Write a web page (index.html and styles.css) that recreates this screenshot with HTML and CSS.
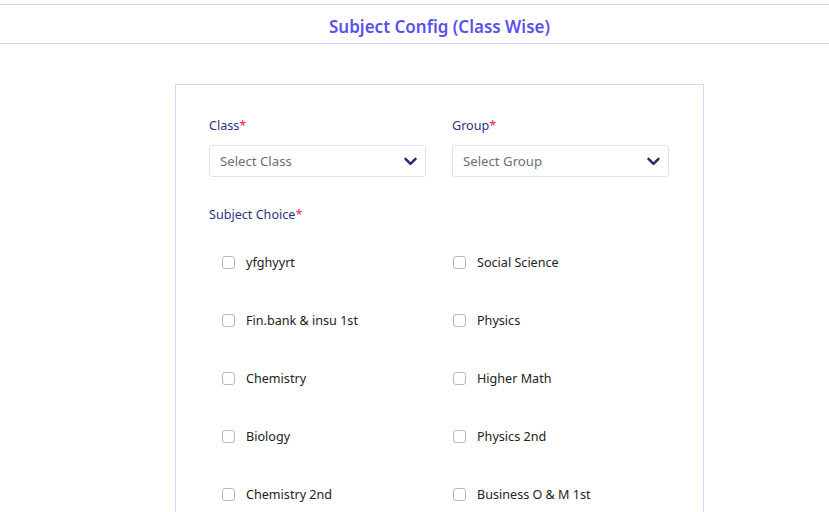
FILE: index.html
```html
<!DOCTYPE html>
<html>
<head>
<meta charset="utf-8">
<link rel="stylesheet" href="styles.css">
</head>
<body>
<header class="page-header">
  <h1 class="title">Subject Config (Class Wise)</h1>
</header>
<main class="main">
  <section class="card">
    <div class="selects">
      <div class="field">
        <label class="label">Class<span class="req">*</span></label>
        <div class="select"><span class="placeholder">Select Class</span>
          <svg class="chev" width="13" height="9" viewBox="0 0 13 9"><path d="M1.5 1.8 L6.5 6.8 L11.5 1.8" fill="none" stroke="#272c6e" stroke-width="2.4" stroke-linecap="round" stroke-linejoin="round"/></svg>
        </div>
      </div>
      <div class="field">
        <label class="label">Group<span class="req">*</span></label>
        <div class="select"><span class="placeholder">Select Group</span>
          <svg class="chev" width="13" height="9" viewBox="0 0 13 9"><path d="M1.5 1.8 L6.5 6.8 L11.5 1.8" fill="none" stroke="#272c6e" stroke-width="2.4" stroke-linecap="round" stroke-linejoin="round"/></svg>
        </div>
      </div>
    </div>
    <div class="label subj">Subject Choice<span class="req">*</span></div>
    <div class="checks">
      <label class="check"><span class="box"></span>yfghyyrt</label>
      <label class="check"><span class="box"></span>Social Science</label>
      <label class="check"><span class="box"></span>Fin.bank &amp; insu 1st</label>
      <label class="check"><span class="box"></span>Physics</label>
      <label class="check"><span class="box"></span>Chemistry</label>
      <label class="check"><span class="box"></span>Higher Math</label>
      <label class="check"><span class="box"></span>Biology</label>
      <label class="check"><span class="box"></span>Physics 2nd</label>
      <label class="check"><span class="box"></span>Chemistry 2nd</label>
      <label class="check"><span class="box"></span>Business O &amp; M 1st</label>
    </div>
  </section>
</main>
</body>
</html>
```
FILE: styles.css
```css
* { box-sizing: border-box; }
html, body { margin: 0; padding: 0; background: #fff; }
body {
  font-family: "Noto Sans", "Open Sans", sans-serif;
  color: #212529;
}
.page-header {
  margin-top: 4px;
  border-top: 1px solid #dcd3fb;
  border-bottom: 1px solid #dcd3fb;
  height: 40px;
  display: flex;
  align-items: center;
  justify-content: center;
  padding-left: 50px;
  padding-top: 4px;
}
.title {
  margin: 0;
  font-size: 17px;
  font-weight: 600;
  color: #5a52e6;
  letter-spacing: 0;
}
.main {
  padding-top: 40px;
  padding-left: 50px;
  display: flex;
  justify-content: center;
}
.card {
  width: 529px;
  height: 500px;
  border: 1px solid #dcd3fb;
  border-bottom: none;
  padding: 28px 33px 0 33px;
}
.selects {
  display: grid;
  grid-template-columns: 217px 217px;
  column-gap: 26px;
}
.label {
  font-size: 12.6px;
  line-height: 18px;
  color: #2a337f;
}
.req { color: #e8253d; }
.select {
  margin-top: 10px;
  height: 32px;
  border: 1px solid #dde2f4;
  border-radius: 3px;
  display: flex;
  align-items: center;
  justify-content: space-between;
  padding: 0 8px 0 10px;
}
.placeholder {
  font-size: 13.2px;
  color: #6c6f78;
}
.subj { margin-top: 29px; }
.checks {
  margin-top: 29px;
  display: grid;
  grid-template-columns: 231px 230px;
  row-gap: 40px;
}
.check {
  display: flex;
  align-items: center;
  height: 18px;
  padding-left: 13px;
  font-size: 12.6px;
  color: #222;
}
.box {
  width: 13px;
  height: 13px;
  border: 1px solid #b8b8b8;
  border-radius: 3px;
  margin-right: 11px;
  background: #fff;
}
```
